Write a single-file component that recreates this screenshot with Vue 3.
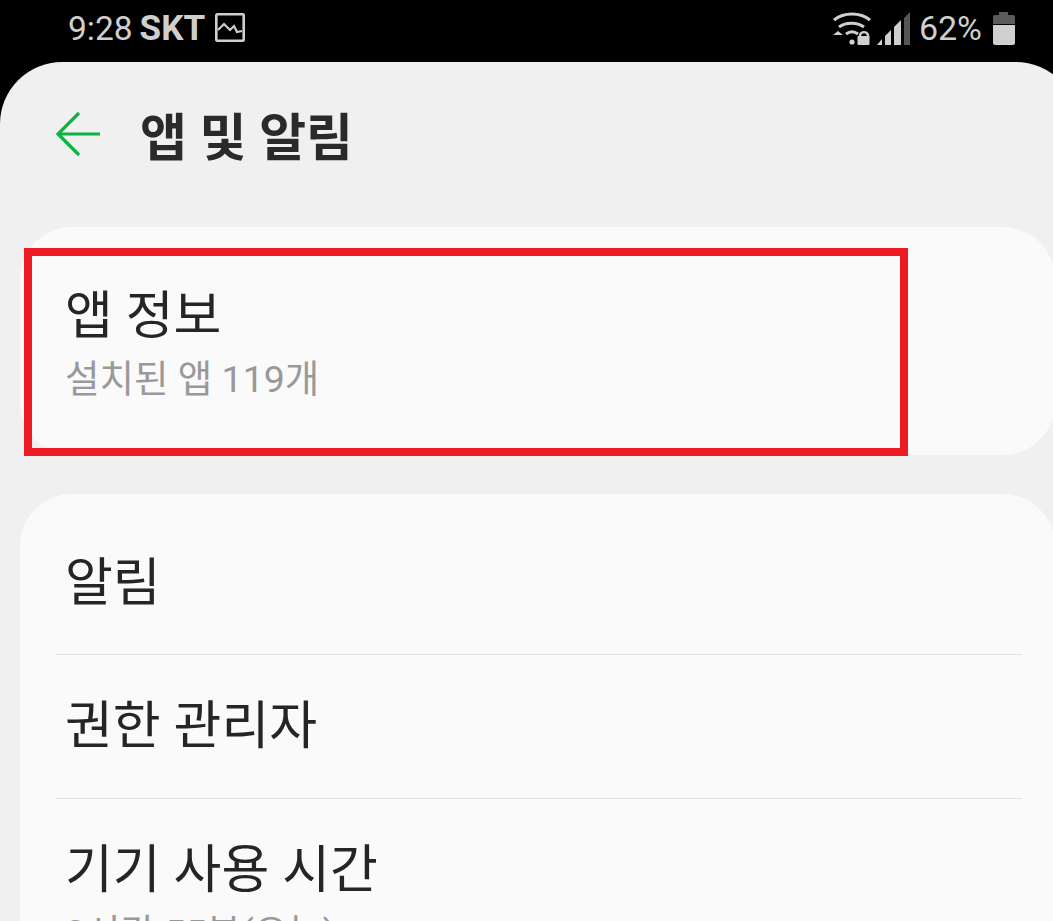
<script setup>
const cardItems = [
  { title: '알림' },
  { title: '권한 관리자' },
  { title: '기기 사용 시간', sub: '3시간 55분(오늘)' },
];
</script>

<template>
  <div class="phone">
    <div class="statusbar">
      <div class="left">
        <span class="time">9:28</span>
        <span class="carrier">SKT</span>
        <svg class="pic" width="30" height="30" viewBox="0 0 30 30" fill="none" stroke="#cfcfcf" stroke-width="2.6">
          <rect x="1.3" y="1.3" width="27.4" height="26.4" rx="1" />
          <path stroke-width="2.2" d="M3 17l6-6 6 6 4-4 3 6 5-1" />
        </svg>
      </div>
      <div class="right">
        <svg class="wifi" width="38" height="33" viewBox="0 0 38 33" fill="none" stroke="#cfcfcf" stroke-width="3">
          <path d="M1 8C11 0 27 0 37 8" />
          <path d="M6 15c7-5 18-5 25 0" />
          <path d="M13 22c4-3 8-3 12 0" />
          <circle cx="19" cy="30" r="2.6" fill="#cfcfcf" stroke="none" />
          <path d="M0 23l5-4 5 4z" fill="#cfcfcf" stroke="none" />
          <path d="M27 26v-3a4.2 4.2 0 0 1 8 0v3" stroke-width="2.4" />
          <rect x="24.500" y="24" width="12" height="9" rx="1" fill="#cfcfcf" stroke="none" />
        </svg>
        <svg class="signal" width="34" height="33" viewBox="0 0 34 33">
          <path d="M0 33l5-6v6z" fill="#cfcfcf" />
          <path d="M8 33V24l6-6v15z" fill="#cfcfcf" />
          <path d="M17 33V15l7-7v25z" fill="#cfcfcf" />
          <path d="M27 33V6l6-6v33z" fill="#555" />
        </svg>
        <span class="pct">62%</span>
        <svg class="batt" width="22" height="33" viewBox="0 0 22 33">
          <path d="M6 0h9v3h5a2 2 0 0 1 2 2v7H0V5a2 2 0 0 1 2-2h4z" fill="#5a5a5a" />
          <path d="M0 13h22v18a2 2 0 0 1-2 2H2a2 2 0 0 1-2-2z" fill="#cfcfcf" />
        </svg>
      </div>
    </div>

    <div class="screen">
      <header class="head">
        <svg class="back" width="45" height="46" viewBox="0 0 45 46" fill="none" stroke="#0cb43f" stroke-width="3.2">
          <path d="M2 23h42" />
          <path d="M23 2L2 23l21 21" />
        </svg>
        <h1>앱 및 알림</h1>
      </header>

      <section class="card first">
        <div class="item">
          <div class="title">앱 정보</div>
          <div class="sub">설치된 앱 119개</div>
        </div>
      </section>

      <section class="card second">
        <div v-for="it in cardItems" :key="it.title" class="item row">
          <div class="title">{{ it.title }}</div>
          <div v-if="it.sub" class="sub">{{ it.sub }}</div>
        </div>
      </section>
    </div>

    <div class="highlight"></div>
  </div>
</template>

<style scoped>
.phone {
  position: relative;
  width: 1053px;
  height: 921px;
  overflow: hidden;
  background: #000;
  font-family: Roboto, "Noto Sans CJK KR", sans-serif;
}

.statusbar {
  height: 62px;
  display: flex;
  justify-content: space-between;
  align-items: center;
  color: #cfcfcf;
  padding: 0 38px 6px 68px;
  box-sizing: border-box;
}

.left,
.right {
  display: flex;
  align-items: center;
}

.time {
  font-size: 33.500px;
}

.carrier {
  font-size: 35px;
  font-weight: 700;
  margin-left: 7px;
}

.pic {
  margin-left: 10px;
}

.signal {
  margin-left: 6px;
}

.pct {
  font-size: 34px;
  margin-left: 8px;
}

.batt {
  margin-left: 11px;
}

.screen {
  width: 1078px;
  height: 900px;
  background: #f0f0f0;
  border-radius: 62px 62px 0 0;
  padding-left: 20px;
  box-sizing: border-box;
  overflow: hidden;
}

.head {
  height: 165px;
  display: flex;
  align-items: center;
  margin-left: -20px;
  padding: 0 0 22px 56px;
  box-sizing: border-box;
}

.head h1 {
  margin: 0 0 0 39px;
  font-size: 51px;
  font-weight: 700;
  color: #2a2a2a;
}

.card {
  width: 1035px;
  box-sizing: border-box;
  background: #fafafa;
  border-radius: 52px;
  padding: 0 33px 0 36px;
}

.first {
  height: 228px;
}

.second {
  margin-top: 39px;
  height: 500px;
}

.item {
  padding-left: 9px;
}

.first .item {
  padding-top: 54px;
}

.row {
  height: 144px;
  box-sizing: border-box;
  padding-top: 36px;
}

.row:first-child {
  height: 160px;
  padding-top: 54px;
}

.row + .row {
  border-top: 1px solid #e3e3e3;
}

.title {
  font-size: 52px;
  line-height: 72px;
  color: #252525;
}

.sub {
  font-size: 37.500px;
  line-height: 52px;
  color: #999;
}

.highlight {
  position: absolute;
  left: 24px;
  top: 248px;
  width: 884px;
  height: 208px;
  box-sizing: border-box;
  border: 8px solid #ed1c24;
}
</style>
